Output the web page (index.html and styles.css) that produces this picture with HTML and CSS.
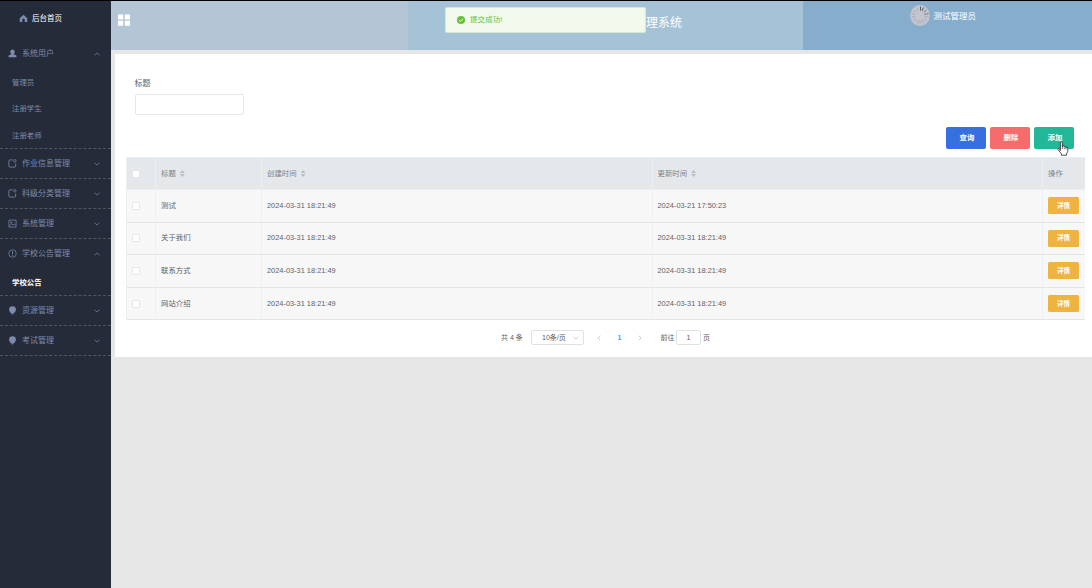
FILE: index.html
```html
<!DOCTYPE html>
<html lang="zh-CN">

<head>
    <meta charset="UTF-8">
    <meta name="viewport" content="width=device-width, initial-scale=1.0">
    <title>管理系统</title>
    <link rel="stylesheet" href="styles.css">
</head>

<body>
    <!-- shared icons -->
    <svg class="sprite">
        <symbol id="arrow" viewBox="0 0 6 4"><path d="M.6.7 3 3.1 5.4.7" fill="none" stroke="currentColor" stroke-width=".7"/></symbol>
        <symbol id="note" viewBox="0 0 10 10"><path d="M5.2 1H2a1 1 0 0 0-1 1V8a1 1 0 0 0 1 1h5.500a1 1 0 0 0 1-1V5" fill="none" stroke="currentColor" stroke-width=".9"/><circle cx="7.600" cy="2" r="1.400" fill="none" stroke="currentColor" stroke-width=".8"/></symbol>
        <symbol id="bulb" viewBox="0 0 10 10"><path d="M5 .3a3.800 3.800 0 0 1 3.800 3.800C8.800 6 7.300 6.700 6.800 8H3.200C2.700 6.700 1.200 6 1.200 4.100A3.800 3.800 0 0 1 5 .3zM3.700 8.400h2.600L5.600 9.500H4.400z" fill="currentColor"/></symbol>
    </svg>

    <div class="app">
        <aside class="sidebar">
            <a class="home">
                <svg class="icon" viewBox="0 0 10 10"><path d="M5 .8 9.200 4.600V9H6.300V6.200a1.300 1.300 0 0 0-2.600 0V9H.8V4.600z" fill="currentColor"/></svg>
                <span>后台首页</span>
            </a>

            <div class="menu open">
                <div class="menu-title">
                    <svg class="icon" viewBox="0 0 10 10"><path d="M5 .6a2.500 2.500 0 0 1 1.400 4.600v.6L9.400 7.200V9.200H.6V7.200L3.600 5.800V5.200A2.500 2.500 0 0 1 5 .6z" fill="currentColor"/></svg>
                    <span>系统用户</span>
                    <svg class="arrow"><use href="#arrow"/></svg>
                </div>
                <a class="sub">管理员</a>
                <a class="sub">注册学生</a>
                <a class="sub">注册老师</a>
            </div>
            <div class="menu">
                <div class="menu-title">
                    <svg class="icon"><use href="#note"/></svg>
                    <span>作业信息管理</span>
                    <svg class="arrow"><use href="#arrow"/></svg>
                </div>
            </div>
            <div class="menu">
                <div class="menu-title">
                    <svg class="icon"><use href="#note"/></svg>
                    <span>科级分类管理</span>
                    <svg class="arrow"><use href="#arrow"/></svg>
                </div>
            </div>
            <div class="menu">
                <div class="menu-title">
                    <svg class="icon" viewBox="0 0 10 10"><path d="M1 1.200h8v7.800H1zM1.500 8 4 5.300 5.500 6.700 7 5.600 8.700 7M3 3.300h1.200v1H3z" fill="none" stroke="currentColor" stroke-width=".8"/></svg>
                    <span>系统管理</span>
                    <svg class="arrow"><use href="#arrow"/></svg>
                </div>
            </div>
            <div class="menu open">
                <div class="menu-title">
                    <svg class="icon" viewBox="0 0 10 10"><circle cx="5" cy="5" r="4.200" fill="none" stroke="currentColor" stroke-width=".8"/><path d="M5 2.600v3M5 6.400v1" stroke="currentColor"/></svg>
                    <span>学校公告管理</span>
                    <svg class="arrow"><use href="#arrow"/></svg>
                </div>
                <a class="sub active">学校公告</a>
            </div>
            <div class="menu">
                <div class="menu-title">
                    <svg class="icon"><use href="#bulb"/></svg>
                    <span>资源管理</span>
                    <svg class="arrow"><use href="#arrow"/></svg>
                </div>
            </div>
            <div class="menu">
                <div class="menu-title">
                    <svg class="icon"><use href="#bulb"/></svg>
                    <span>考试管理</span>
                    <svg class="arrow"><use href="#arrow"/></svg>
                </div>
            </div>
        </aside>

        <div class="main">
            <header class="header">
                <div class="header-left">
                    <svg class="grid-icon" viewBox="0 0 12 12"><path d="M0 .5h5.200v5H0zM6.800.5H12v5H6.800zM0 6.800h5.200v4.900H0zM6.800 6.800H12v4.900H6.800z" fill="#fff"/></svg>
                </div>
                <div class="header-title">理系统</div>
                <div class="header-user">
                    <svg class="avatar" viewBox="0 0 20 22">
                        <ellipse cx="10" cy="10.500" rx="9.800" ry="10.500" fill="#c3c6cf"/>
                        <g stroke-width="1">
                            <path d="M10.500 1.500v4M13.500 2.500 12 6" stroke="#555b66"/>
                            <path d="M16.500 5 13.800 7.600M18.500 8.500l-4 1" stroke="#747a85"/>
                            <path d="M18.500 12.500l-4-1M16.500 16 13.800 13.400M13.500 18.500 12 15M10 19.500v-4M7 18.500 8.200 15M3.500 16l2.700-2.600M1.500 12.500l4-1M1.500 8.500l4 1M3.500 5l2.700 2.600M7 2.500 8.200 6" stroke="#a8acb7"/>
                        </g>
                    </svg>
                    <span>测试管理员</span>
                </div>
            </header>

            <section class="card">
                <div class="search">
                    <label for="title">标题</label>
                    <input id="title" type="text">
                </div>

                <div class="buttons">
                    <button class="btn blue">查询</button>
                    <button class="btn red">删除</button>
                    <button class="btn green">添加</button>
                </div>

                <div class="table">
                    <div class="row head">
                        <div class="cell"><i class="check"></i></div>
                        <div class="cell">标题<i class="sort"></i></div>
                        <div class="cell">创建时间<i class="sort"></i></div>
                        <div class="cell">更新时间<i class="sort"></i></div>
                        <div class="cell">操作</div>
                    </div>
                    <div class="row">
                        <div class="cell"><i class="check"></i></div>
                        <div class="cell">测试</div>
                        <div class="cell">2024-03-31 18:21:49</div>
                        <div class="cell">2024-03-21 17:50:23</div>
                        <div class="cell"><button class="detail">详情</button></div>
                    </div>
                    <div class="row">
                        <div class="cell"><i class="check"></i></div>
                        <div class="cell">关于我们</div>
                        <div class="cell">2024-03-31 18:21:49</div>
                        <div class="cell">2024-03-31 18:21:49</div>
                        <div class="cell"><button class="detail">详情</button></div>
                    </div>
                    <div class="row">
                        <div class="cell"><i class="check"></i></div>
                        <div class="cell">联系方式</div>
                        <div class="cell">2024-03-31 18:21:49</div>
                        <div class="cell">2024-03-31 18:21:49</div>
                        <div class="cell"><button class="detail">详情</button></div>
                    </div>
                    <div class="row">
                        <div class="cell"><i class="check"></i></div>
                        <div class="cell">网站介绍</div>
                        <div class="cell">2024-03-31 18:21:49</div>
                        <div class="cell">2024-03-31 18:21:49</div>
                        <div class="cell"><button class="detail">详情</button></div>
                    </div>
                </div>

                <div class="pagination">
                    <span class="total">共 4 条</span>
                    <span class="size">10条/页<svg class="arrow"><use href="#arrow"/></svg></span>
                    <svg class="arrow prev"><use href="#arrow"/></svg>
                    <span class="current">1</span>
                    <svg class="arrow next"><use href="#arrow"/></svg>
                    <span>前往</span>
                    <span class="jump">1</span>
                    <span>页</span>
                </div>
            </section>
        </div>
    </div>

    <div class="message">
        <svg viewBox="0 0 10 10"><circle cx="5" cy="5" r="5" fill="#67c23a"/><path d="M2.700 5.100 4.400 6.700 7.400 3.600" fill="none" stroke="#fff" stroke-width="1.100"/></svg>
        <span>提交成功!</span>
    </div>

    <svg class="cursor" viewBox="0 0 12 15"><path d="M3.400 9.500V1.700a1 1 0 0 1 2 0V6l.2-.7a.9.9 0 0 1 1.700.2v.6a.9.9 0 0 1 1.700.2v.6a.9.9 0 0 1 1.800.3v3.300L9.600 12.500v1.700H4.400v-1.500L1 8.600C.4 7.700 1.600 6.900 2.300 7.700z" fill="#fff" stroke="#222" stroke-width=".8"/><path d="M5.400 6v2M7.300 6.500v1.700M9 7v1.500" stroke="#222" stroke-width=".6"/></svg>
</body>

</html>
```
FILE: styles.css
```css
* {
    box-sizing: border-box;
}

body {
    margin: 0;
    height: 588px;
    overflow: hidden;
    background: #e6e6e6;
    color: #606266;
    font-family: "Liberation Sans", "Noto Sans CJK SC", sans-serif;
    font-size: 7.4px;
    line-height: 12px;
}

button {
    padding: 0;
    border: 0;
    color: #fff;
    font: inherit;
}

.sprite {
    display: none;
}

.app {
    display: flex;
    height: 588px;
    border-top: 1px solid #000;
}

/* sidebar */
.sidebar {
    width: 111px;
    flex: none;
    background: #262b39;
    color: #7b8cad;
}

.icon {
    width: 9px;
    height: 9px;
    flex: none;
}

.arrow {
    width: 6px;
    height: 4px;
    flex: none;
}

.home {
    display: flex;
    align-items: center;
    gap: 4px;
    height: 37px;
    padding: 0 0 2px 19px;
    font-size: 7.5px;
}

.home span {
    color: #fff;
}

.menu {
    border-bottom: 1px dashed #535560;
}

.menu-title {
    display: flex;
    align-items: center;
    height: 29.1px;
    padding: 0 11px 0 8px;
    font-size: 8px;
}

.menu-title span {
    flex: 1;
    padding-left: 5px;
}

.open .menu-title {
    height: 30px;
    padding-bottom: 1px;
}

.open .menu-title .arrow {
    transform: rotate(180deg);
}

.sub {
    display: block;
    height: 26.4px;
    padding-left: 12px;
    font-size: 7.4px;
    line-height: 27px;
}

.home + .menu {
    padding-top: 1px;
}

.active {
    height: 25.8px;
    color: #fff;
    font-weight: bold;
}

/* header */
.main {
    flex: 1;
    min-width: 0;
}

.header {
    display: flex;
    height: 49px;
    background: #87adcd;
    color: #fff;
}

.header-left {
    width: 297px;
    padding: 13px 7px;
    background: #b4c6d6;
}

.grid-icon {
    display: block;
    width: 12px;
    height: 12px;
}

.header-title {
    width: 395.4px;
    padding: 13px 0 0 238px;
    background: #a6c2d7;
    font-size: 12px;
    line-height: 18px;
}

.header-user {
    display: flex;
    align-items: flex-start;
    gap: 3.4px;
    padding: 4px 0 0 106.6px;
    font-size: 8.5px;
    line-height: 22px;
}

.avatar {
    width: 20px;
    height: 22px;
}

/* content */
.card {
    height: 303px;
    margin: 4px 0 0 4px;
    padding: 24px 7px 0 11px;
    background: #fff;
}

.search {
    padding-left: 8.6px;
}

.search label {
    display: block;
    height: 16px;
    font-size: 8px;
}

.search input {
    display: block;
    width: 109px;
    height: 21px;
    border: 1px solid #e4e6ea;
    border-radius: 2px;
}

.buttons {
    display: flex;
    justify-content: flex-end;
    gap: 4px;
    padding: 12px 11px 8px 0;
}

.btn {
    width: 40px;
    height: 22px;
    padding-left: 2px;
    border-radius: 2px;
    font-weight: bold;
}

.blue {
    background: #356fe0;
}

.red {
    background: #f56c6c;
}

.green {
    background: #22b797;
}

.table {
    border: 1px solid #ebeef2;
    border-width: 1px 0 0 1px;
}

.row {
    display: grid;
    grid-template-columns: 29px 106px 390.5px 390.5px 1fr;
    height: 32.6px;
    background: #f7f7f7;
}

.head {
    height: 32px;
    background: #e4e8eb;
    color: #7c8188;
}

.cell {
    display: flex;
    align-items: center;
    padding-left: 5px;
    border-right: 1px solid #edf0f5;
    border-bottom: 1px solid #e3e5e8;
}

.head .cell {
    border-color: #ebeef2;
}

.cell:last-child {
    border-right: 0;
}

.check {
    width: 8px;
    height: 8px;
    border: 1px solid #e4e6eb;
    border-radius: 1px;
    background: #fff;
}

/* up and down triangles */
.sort {
    width: 5px;
    height: 7px;
    margin-left: 4px;
    background: #b9bec7;
    clip-path: polygon(50% 0, 100% 43%, 0 43%, 0 57%, 100% 57%, 50% 100%, 0 57%, 0 43%);
}

.detail {
    width: 31px;
    height: 17px;
    border-radius: 1.5px;
    background: #efb440;
    font-size: 6.5px;
    font-weight: bold;
}

.pagination {
    display: flex;
    align-items: center;
    height: 15px;
    margin-top: 10px;
    padding-left: 375px;
    font-size: 7px;
}

.total {
    width: 30px;
}

.size {
    display: flex;
    align-items: center;
    justify-content: space-between;
    width: 53px;
    height: 15px;
    padding: 0 4px 0 10px;
    border: 1px solid #dfe1e6;
    border-radius: 2px;
}

.pagination .arrow {
    color: #b4b8c0;
}

.pagination .prev {
    margin-left: 12px;
    transform: rotate(90deg);
}

.current {
    margin: 0 16px 0 15.5px;
    color: #409eff;
    font-weight: bold;
}

.pagination .next {
    margin-right: 17px;
    transform: rotate(-90deg);
}

.jump {
    width: 25px;
    height: 15px;
    margin: 0 2px 0 1.5px;
    border: 1px solid #dfe1e6;
    border-radius: 2px;
    line-height: 14px;
    text-align: center;
}

/* toast over the header */
.message {
    position: absolute;
    top: 7px;
    left: 445px;
    display: flex;
    align-items: center;
    gap: 5px;
    width: 201px;
    height: 26px;
    padding-left: 11px;
    border: 1px solid #d5e9d2;
    border-radius: 2px;
    background: #f0f9eb;
    color: #67c23a;
    letter-spacing: .2px;
}

.message svg {
    width: 8px;
    height: 8px;
}

.cursor {
    position: absolute;
    top: 141px;
    left: 1057px;
    width: 12px;
    height: 15px;
}
```
